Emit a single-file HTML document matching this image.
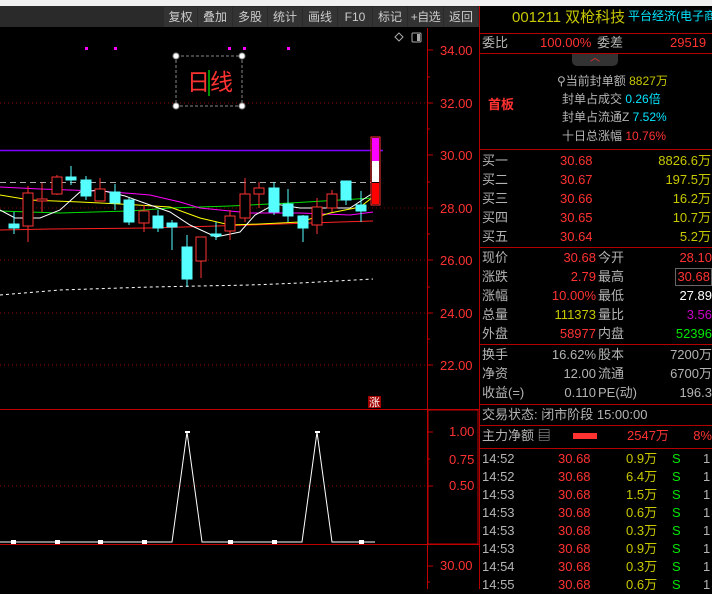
<!DOCTYPE html>
<html><head><meta charset="utf-8">
<style>
*{margin:0;padding:0;box-sizing:border-box}
body{width:712px;height:589px;background:#000;overflow:hidden;position:relative;font-family:"Liberation Sans","Noto Sans CJK SC",sans-serif;font-size:13px}
.t{position:absolute;white-space:nowrap;line-height:18px}
.r{color:#ff3232}.y{color:#c8c800}.c{color:#00e6ff}.g{color:#b4b4b4}.gr{color:#00e600}.w{color:#fff}.p{color:#c800c8}
.hl{position:absolute;left:479px;width:233px;height:1px;background:#b40000}
.btn{position:absolute;top:7px;height:20px;background:#333;color:#ccc;font-size:12px;line-height:20px;text-align:center;overflow:hidden;white-space:nowrap}
</style></head><body>
<div style="position:absolute;left:0;top:0;width:712px;height:6px;background:#f0f0f0"></div>
<div style="position:absolute;left:0;top:6px;width:479px;height:21px;background:#2a2a2a"></div>
<div class="btn" style="left:164px;width:33px">复权</div>
<div class="btn" style="left:198px;width:34px">叠加</div>
<div class="btn" style="left:233px;width:34px">多股</div>
<div class="btn" style="left:268px;width:34px">统计</div>
<div class="btn" style="left:303px;width:34px">画线</div>
<div class="btn" style="left:338px;width:34px">F10</div>
<div class="btn" style="left:373px;width:34px">标记</div>
<div class="btn" style="left:408px;width:35px;letter-spacing:-0.5px">+自选</div>
<div class="btn" style="left:444px;width:34px">返回</div>

<svg style="position:absolute;left:0;top:0" width="479" height="589">
<g stroke="#8a0000" stroke-dasharray="1,3">
<line x1="0" y1="103" x2="427" y2="103"/><line x1="0" y1="208" x2="427" y2="208"/><line x1="0" y1="260" x2="427" y2="260"/>
<line x1="0" y1="313" x2="427" y2="313"/><line x1="0" y1="365" x2="427" y2="365"/><line x1="0" y1="486" x2="427" y2="486"/>
</g>
<line x1="427.5" y1="28" x2="427.5" y2="589" stroke="#c00000"/>
<g stroke="#c00000">
<line x1="427" y1="50" x2="433" y2="50"/><line x1="427" y1="103" x2="433" y2="103"/><line x1="427" y1="155" x2="433" y2="155"/><line x1="427" y1="208" x2="433" y2="208"/><line x1="427" y1="260" x2="433" y2="260"/><line x1="427" y1="313" x2="433" y2="313"/><line x1="427" y1="365" x2="433" y2="365"/>
<line x1="427" y1="77" x2="430" y2="77"/><line x1="427" y1="129" x2="430" y2="129"/><line x1="427" y1="182" x2="430" y2="182"/><line x1="427" y1="234" x2="430" y2="234"/><line x1="427" y1="287" x2="430" y2="287"/><line x1="427" y1="339" x2="430" y2="339"/>
<line x1="427" y1="432" x2="433" y2="432"/><line x1="427" y1="459" x2="430" y2="459"/><line x1="427" y1="486" x2="433" y2="486"/><line x1="427" y1="566" x2="433" y2="566"/><line x1="427" y1="582" x2="430" y2="582"/>
</g>
<line x1="0" y1="409.5" x2="479" y2="409.5" stroke="#c00000"/>
<line x1="0" y1="544.5" x2="479" y2="544.5" stroke="#c00000"/>
<rect x="428" y="410" width="50" height="134" fill="none" stroke="#c00000"/>
<g fill="#ff3232" font-size="13" font-family="Liberation Sans,sans-serif">
<text x="440" y="55">34.00</text><text x="440" y="108">32.00</text><text x="440" y="160">30.00</text><text x="440" y="213">28.00</text><text x="440" y="265">26.00</text><text x="440" y="318">24.00</text><text x="440" y="370">22.00</text>
<text x="449" y="436">1.00</text><text x="449" y="464">0.75</text><text x="449" y="490">0.50</text><text x="440" y="570">30.00</text>
</g>
<g fill="#ff00ff"><rect x="85" y="47" width="3" height="3"/><rect x="114" y="47" width="3" height="3"/><rect x="228" y="47" width="3" height="3"/><rect x="243" y="47" width="3" height="3"/><rect x="287" y="47" width="3" height="3"/></g>
<path d="M399 33l4 4-4 4-4-4z" fill="none" stroke="#aaa"/>
<rect x="412" y="33" width="9" height="9" rx="1" fill="none" stroke="#aaa"/><rect x="417" y="34" width="3" height="7" fill="#aaa"/>
<rect x="176" y="56" width="66" height="50" fill="none" stroke="#888" stroke-dasharray="3,2"/>
<g fill="#fff" stroke="#888"><circle cx="176" cy="56" r="3"/><circle cx="242" cy="56" r="3"/><circle cx="176" cy="106" r="3"/><circle cx="242" cy="106" r="3"/></g>
<text x="187" y="90" fill="#ff3232" font-size="23" font-family="Noto Sans CJK SC,sans-serif">日线</text>
<line x1="209" y1="70" x2="209" y2="96" stroke="#00c000" stroke-width="1.5"/>
<line x1="0" y1="150.5" x2="383" y2="150.5" stroke="#8000ff" stroke-width="1.5"/>
<line x1="0" y1="182.5" x2="375" y2="182.5" stroke="#aaa" stroke-dasharray="6,4"/>
<polyline fill="none" stroke="#fff" stroke-dasharray="3,3" points="0,295 60,290 150,287 250,285 300,283 373,279"/>
<polyline fill="none" stroke="#ff2020" points="0,230 50,229 150,228 250,225 340,222 373,221"/>
<polyline fill="none" stroke="#00e000" points="0,211 60,213 130,211 170,208 230,206 290,203 340,200 373,198"/>
<polyline fill="none" stroke="#ff00ff" points="0,187 40,189 100,191 150,195 180,202 200,208 250,213 300,213 350,215 373,212"/>
<polyline fill="none" stroke="#ffff00" points="0,195 30,200 80,202 120,204 170,207 200,218 230,225 260,224 300,222 330,213 360,207 373,197"/>
<polyline fill="none" stroke="#fff" points="0,210 15,218 40,218 60,210 80,192 100,190 125,196 150,205 170,212 190,225 216,237 240,232 255,215 275,204 300,208 330,208 350,208 373,193"/>
<g fill="none" stroke="#ff3232">
<line x1="28" y1="186" x2="28" y2="242"/><rect x="23" y="193" width="10" height="33" fill="#000"/>
<line x1="42" y1="183" x2="42" y2="212"/><rect x="37" y="199" width="10" height="2" fill="#000"/>
<line x1="57" y1="175" x2="57" y2="195"/><rect x="52" y="177" width="10" height="17" fill="#000"/>
<line x1="100" y1="178" x2="100" y2="200"/><rect x="95" y="189" width="10" height="12" fill="#000"/>
<line x1="144" y1="205" x2="144" y2="232"/><rect x="139" y="211" width="10" height="12" fill="#000"/>
<line x1="201" y1="238" x2="201" y2="278"/><rect x="196" y="237" width="10" height="24" fill="#000"/>
<line x1="230" y1="210" x2="230" y2="240"/><rect x="225" y="216" width="10" height="15" fill="#000"/>
<line x1="245" y1="178" x2="245" y2="222"/><rect x="240" y="194" width="10" height="24" fill="#000"/>
<line x1="259" y1="182" x2="259" y2="208"/><rect x="254" y="188" width="10" height="6" fill="#000"/>
<line x1="317" y1="198" x2="317" y2="234"/><rect x="312" y="207" width="10" height="18" fill="#000"/>
<line x1="332" y1="190" x2="332" y2="212"/><rect x="327" y="194" width="10" height="14" fill="#000"/>
</g>
<g fill="#55ffff" stroke="#55ffff">
<line x1="14" y1="212" x2="14" y2="234"/><rect x="9" y="224" width="10" height="4"/>
<line x1="71" y1="166" x2="71" y2="185"/><rect x="66" y="177" width="10" height="3"/>
<line x1="86" y1="176" x2="86" y2="200"/><rect x="81" y="180" width="10" height="16"/>
<line x1="115" y1="184" x2="115" y2="210"/><rect x="110" y="192" width="10" height="11"/>
<line x1="129" y1="198" x2="129" y2="225"/><rect x="124" y="200" width="10" height="22"/>
<line x1="158" y1="210" x2="158" y2="232"/><rect x="153" y="216" width="10" height="12"/>
<line x1="172" y1="220" x2="172" y2="250"/><rect x="167" y="223" width="10" height="4"/>
<line x1="187" y1="235" x2="187" y2="287"/><rect x="182" y="247" width="10" height="32"/>
<line x1="216" y1="222" x2="216" y2="240"/><rect x="211" y="234" width="10" height="2"/>
<line x1="274" y1="182" x2="274" y2="215"/><rect x="269" y="188" width="10" height="24"/>
<line x1="288" y1="189" x2="288" y2="222"/><rect x="283" y="204" width="10" height="12"/>
<line x1="303" y1="215" x2="303" y2="242"/><rect x="298" y="216" width="10" height="12"/>
<line x1="346" y1="181" x2="346" y2="205"/><rect x="341" y="181" width="10" height="19"/>
<line x1="361" y1="191" x2="361" y2="222"/><rect x="356" y="205" width="10" height="6"/>
</g>
<rect x="371" y="137" width="9" height="68" fill="#000" stroke="#ff3232"/>
<rect x="372" y="138" width="7" height="23" fill="#ff00ff"/><rect x="372" y="161" width="7" height="21" fill="#fff"/><rect x="372" y="183" width="7" height="21" fill="#ff0000"/>
<rect x="368" y="396" width="13" height="12" fill="#a00000"/><text x="369" y="406" fill="#fff" font-size="11" font-family="Noto Sans CJK SC,sans-serif">涨</text>
<polyline fill="none" stroke="#fff" points="0,542 172,542 187,432 202,542 302,542 317,432 332,542 375,542"/>
<g fill="#fff"><rect x="11" y="540" width="5" height="4"/><rect x="55" y="540" width="5" height="4"/><rect x="98" y="540" width="5" height="4"/><rect x="142" y="540" width="5" height="4"/><rect x="228" y="540" width="5" height="4"/><rect x="272" y="540" width="5" height="4"/><rect x="359" y="540" width="5" height="4"/><rect x="185" y="431" width="5" height="2"/><rect x="315" y="431" width="5" height="2"/></g>
</svg>

<div style="position:absolute;left:479px;top:6px;width:1px;height:583px;background:#b40000"></div>
<div class="t y" style="left:512px;top:9px;font-size:15px">001211 双枪科技</div>
<div class="t c" style="left:628px;top:7px;font-size:12px">平台经济(电子商</div>
<div class="hl" style="top:33px"></div>
<div class="t g" style="left:482px;top:34px">委比</div><div class="t r" style="left:540px;top:34px">100.00%</div><div class="t g" style="left:597px;top:34px">委差</div><div class="t r" style="left:670px;top:34px">29519</div>
<div class="hl" style="top:53px"></div>
<div style="position:absolute;left:572px;top:54px;width:46px;height:12px;background:#333;border-radius:0 0 5px 5px;color:#f33;font-size:10px;text-align:center;line-height:10px">︿</div>
<div class="t g" style="left:557px;top:72px;font-size:12px">⚲当前封单额 <span class="y">8827万</span></div>
<div class="t g" style="left:562px;top:90px;font-size:12px">封单占成交 <span class="c">0.26倍</span></div>
<div class="t g" style="left:562px;top:108px;font-size:12px">封单占流通Z <span class="c">7.52%</span></div>
<div class="t g" style="left:562px;top:127px;font-size:12px">十日总涨幅 <span class="r">10.76%</span></div>
<div class="t r" style="left:488px;top:96px;font-weight:bold">首板</div>
<div class="hl" style="top:149px"></div>
<div class="t g" style="left:482px;top:152px">买一</div><div class="t r" style="left:560px;top:152px">30.68</div><div class="t y" style="right:1px;top:152px">8826.6万</div>
<div class="t g" style="left:482px;top:171px">买二</div><div class="t r" style="left:560px;top:171px">30.67</div><div class="t y" style="right:1px;top:171px">197.5万</div>
<div class="t g" style="left:482px;top:190px">买三</div><div class="t r" style="left:560px;top:190px">30.66</div><div class="t y" style="right:1px;top:190px">16.2万</div>
<div class="t g" style="left:482px;top:209px">买四</div><div class="t r" style="left:560px;top:209px">30.65</div><div class="t y" style="right:1px;top:209px">10.7万</div>
<div class="t g" style="left:482px;top:228px">买五</div><div class="t r" style="left:560px;top:228px">30.64</div><div class="t y" style="right:1px;top:228px">5.2万</div>
<div class="hl" style="top:247px"></div>
<div class="t g" style="left:482px;top:249px">现价</div><div class="t r" style="right:116px;top:249px">30.68</div><div class="t g" style="left:598px;top:249px">今开</div><div class="t r" style="right:0;top:249px">28.10</div>
<div class="t g" style="left:482px;top:268px">涨跌</div><div class="t r" style="right:116px;top:268px">2.79</div><div class="t g" style="left:598px;top:268px">最高</div><div class="t r" style="right:0;top:268px;border:1px solid #666;padding:0 1px;line-height:16px">30.68</div>
<div class="t g" style="left:482px;top:287px">涨幅</div><div class="t r" style="right:116px;top:287px">10.00%</div><div class="t g" style="left:598px;top:287px">最低</div><div class="t w" style="right:0;top:287px">27.89</div>
<div class="t g" style="left:482px;top:306px">总量</div><div class="t y" style="right:116px;top:306px">111373</div><div class="t g" style="left:598px;top:306px">量比</div><div class="t p" style="right:0;top:306px">3.56</div>
<div class="t g" style="left:482px;top:325px">外盘</div><div class="t r" style="right:116px;top:325px">58977</div><div class="t g" style="left:598px;top:325px">内盘</div><div class="t gr" style="right:0;top:325px">52396</div>
<div class="hl" style="top:344px"></div>
<div class="t g" style="left:482px;top:346px">换手</div><div class="t g" style="right:116px;top:346px">16.62%</div><div class="t g" style="left:598px;top:346px">股本</div><div class="t g" style="right:0;top:346px">7200万</div>
<div class="t g" style="left:482px;top:365px">净资</div><div class="t g" style="right:116px;top:365px">12.00</div><div class="t g" style="left:598px;top:365px">流通</div><div class="t g" style="right:0;top:365px">6700万</div>
<div class="t g" style="left:482px;top:384px">收益(=)</div><div class="t g" style="right:116px;top:384px">0.110</div><div class="t g" style="left:598px;top:384px">PE(动)</div><div class="t g" style="right:0;top:384px">196.3</div>
<div class="hl" style="top:404px"></div>
<div class="t g" style="left:482px;top:406px">交易状态: 闭市阶段 15:00:00</div>
<div class="hl" style="top:425px"></div>
<div class="t g" style="left:482px;top:427px">主力净额 ▤</div>
<div style="position:absolute;left:573px;top:433px;width:24px;height:6px;background:#ff3232"></div>
<div class="t r" style="left:627px;top:427px">2547万</div><div class="t r" style="right:0;top:427px">8%</div>
<div class="hl" style="top:448px"></div>
<div class="t g" style="left:482px;top:450px;line-height:18px">14:52<br>14:52<br>14:53<br>14:53<br>14:53<br>14:53<br>14:54<br>14:55</div>
<div class="t r" style="left:558px;top:450px;line-height:18px">30.68<br>30.68<br>30.68<br>30.68<br>30.68<br>30.68<br>30.68<br>30.68</div>
<div class="t y" style="left:626px;top:450px;line-height:18px">0.9万<br>6.4万<br>1.5万<br>0.6万<br>0.3万<br>0.9万<br>0.3万<br>0.6万</div>
<div class="t gr" style="left:672px;top:450px;line-height:18px">S<br>S<br>S<br>S<br>S<br>S<br>S<br>S</div>
<div class="t g" style="left:703px;top:450px;line-height:18px">1<br>1<br>1<br>1<br>1<br>1<br>1<br>1</div>
</body></html>
